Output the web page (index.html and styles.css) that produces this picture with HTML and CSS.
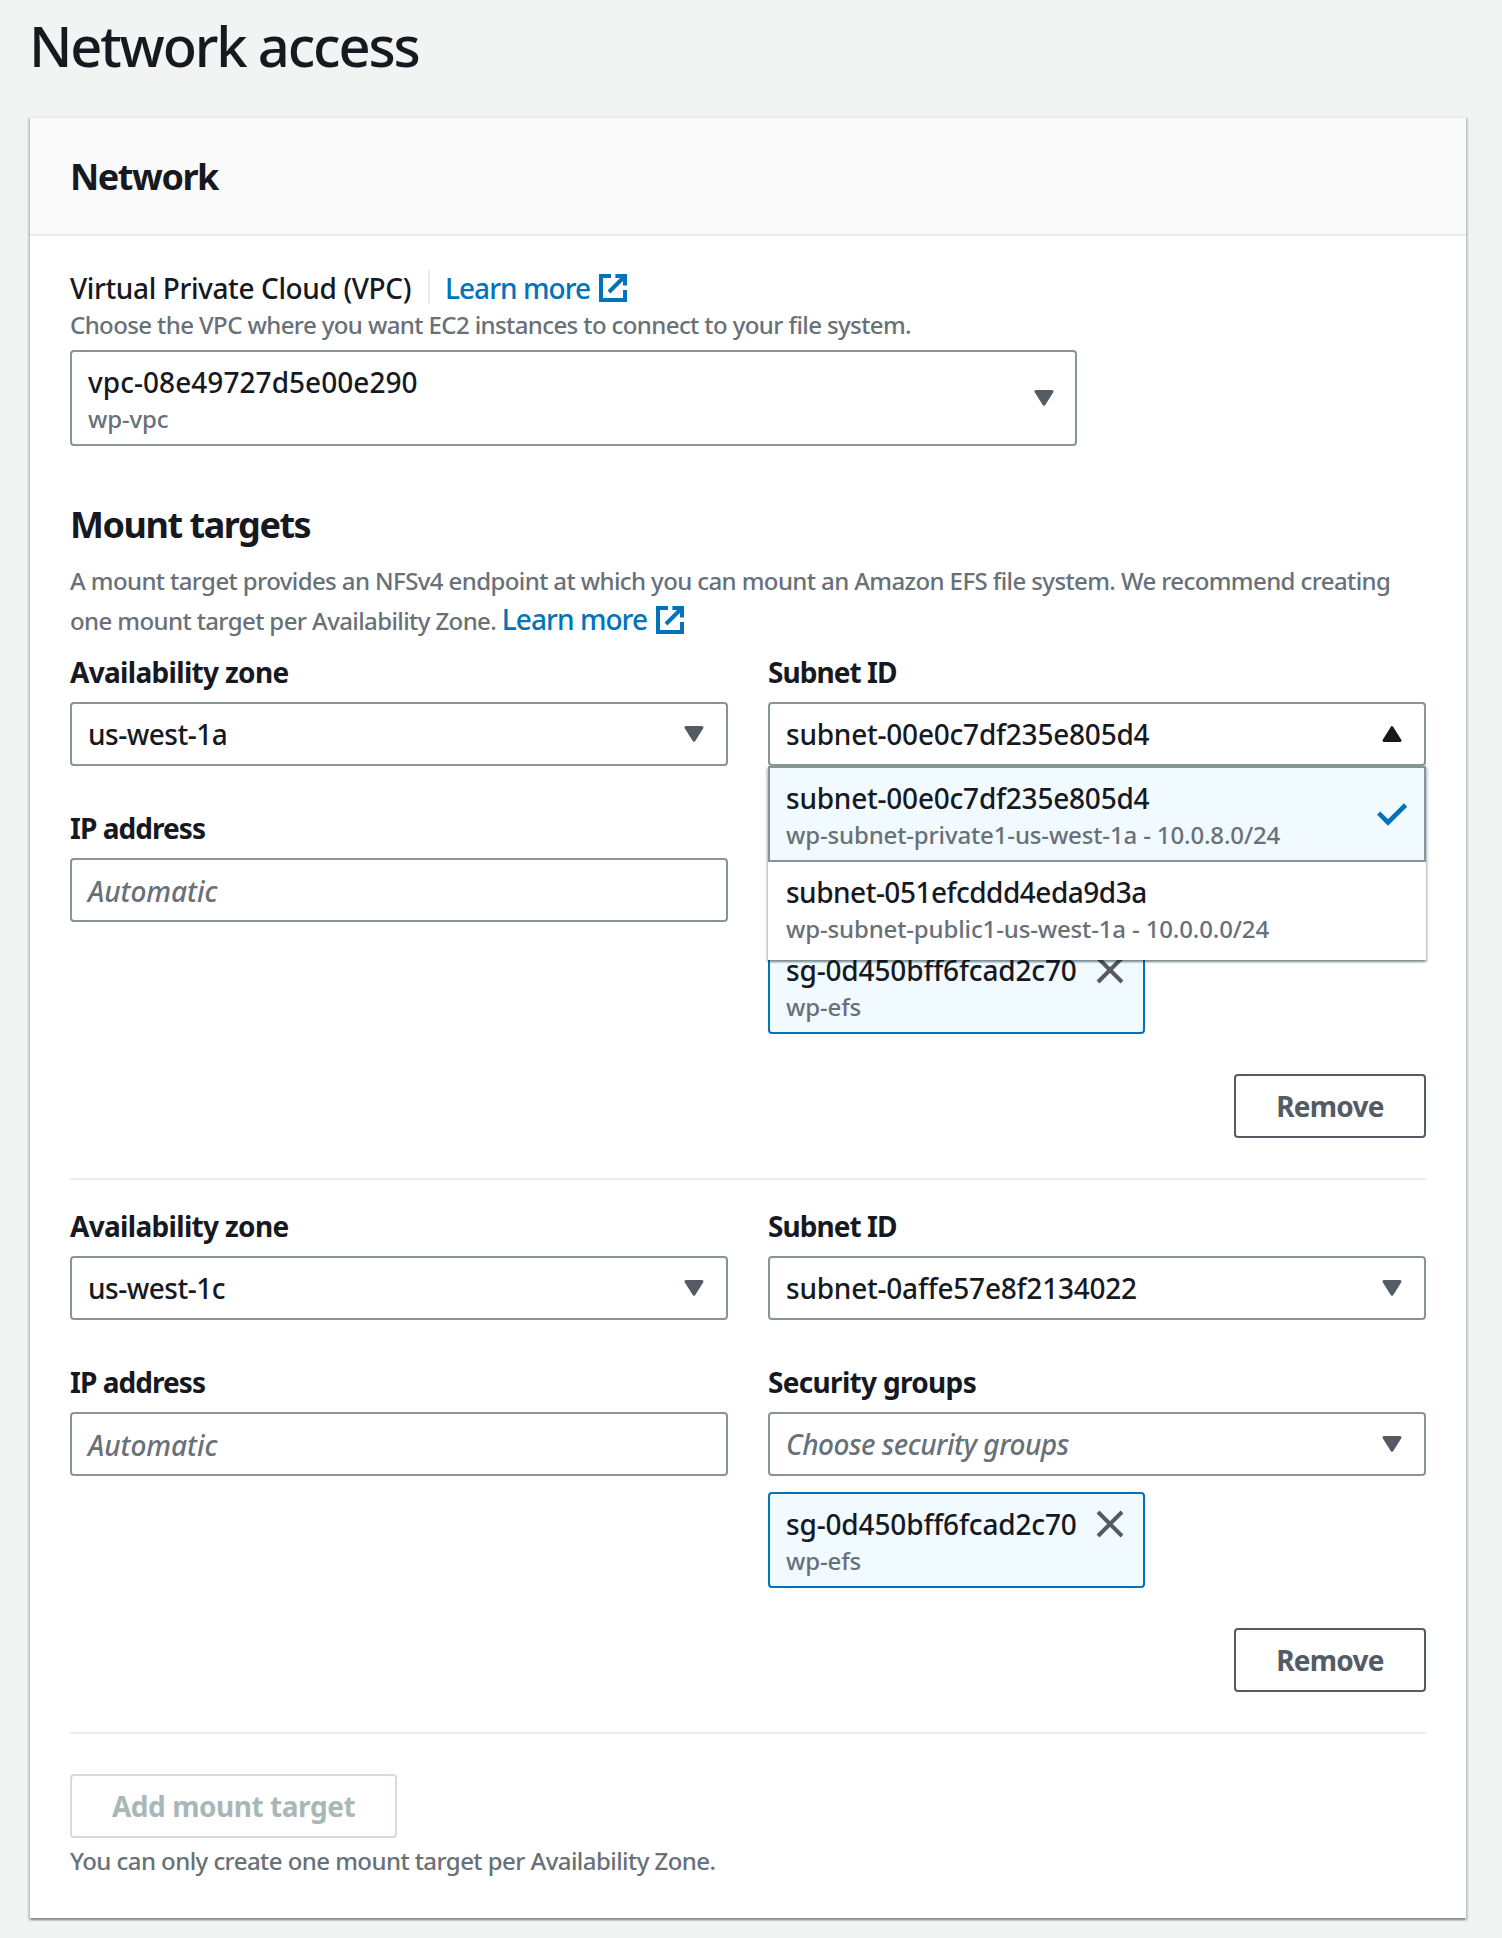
FILE: index.html
```html
<!DOCTYPE html>
<html lang="en">
<head>
<meta charset="utf-8">
<title>Network access</title>
<link rel="stylesheet" href="styles.css">
</head>
<body>
<svg class="sprite" width="0" height="0">
  <symbol id="caret" viewBox="0 0 20 16"><path d="M2 1.5h16L10 14.3z" stroke-width="3" stroke-linejoin="round" stroke="currentColor" fill="currentColor"/></symbol>
  <symbol id="external" viewBox="0 0 16 16"><path d="M14 9v5H2V2h5M9.2 2H14v4.8M6 10l8-8" fill="none" stroke="currentColor" stroke-width="2"/></symbol>
  <symbol id="close" viewBox="0 0 16 16"><path d="M2 2l12 12M14 2L2 14" fill="none" stroke="currentColor" stroke-width="2"/></symbol>
  <symbol id="check" viewBox="0 0 32 32"><path d="M2.7 15.2l9.3 9.3L29.6 7" fill="none" stroke="currentColor" stroke-width="4.6"/></symbol>
</svg>
<main class="page">
  <h1 class="page-title">Network access</h1>
  <section class="card">
    <header class="card-header"><h2 class="heading">Network</h2></header>
    <div class="card-body">
      <div class="vpc-row">
        <span class="vpc-label">Virtual Private Cloud (VPC)</span>
        <a class="link vpc-link"><span>Learn more</span><svg class="icon"><use href="#external"/></svg></a>
      </div>
      <p class="hint">Choose the VPC where you want EC2 instances to connect to your file system.</p>
      <div class="select select-tall">
        <div class="option-text"><span class="value vpc-id">vpc-08e49727d5e00e290</span><span class="sub">wp-vpc</span></div>
        <svg class="caret"><use href="#caret"/></svg>
      </div>

      <h2 class="heading mount-heading">Mount targets</h2>
      <p class="hint mount-hint">A mount target provides an NFSv4 endpoint at which you can mount an Amazon EFS file system. We recommend creating<br>one mount target per Availability Zone. <a class="link"><span>Learn more</span><svg class="icon"><use href="#external"/></svg></a></p>

      <div class="target">
        <div class="column">
          <label class="label">Availability zone</label>
          <div class="select"><span class="value zone">us-west-1a</span><svg class="caret"><use href="#caret"/></svg></div>
          <label class="label label-next tight">IP address</label>
          <div class="select"><span class="placeholder auto">Automatic</span></div>
        </div>
        <div class="column">
          <label class="label tight">Subnet ID</label>
          <div class="select select-open">
            <span class="value">subnet-00e0c7df235e805d4</span><svg class="caret caret-up"><use href="#caret"/></svg>
            <div class="dropdown">
              <div class="option option-selected">
                <div class="option-text"><span class="value">subnet-00e0c7df235e805d4</span><span class="sub">wp-subnet-private1-us-west-1a - 10.0.8.0/24</span></div>
                <svg class="icon check"><use href="#check"/></svg>
              </div>
              <div class="option option-next">
                <div class="option-text"><span class="value alt-id">subnet-051efcddd4eda9d3a</span><span class="sub">wp-subnet-public1-us-west-1a - 10.0.0.0/24</span></div>
              </div>
            </div>
          </div>
          <label class="label label-next">Security groups</label>
          <div class="select"><span class="placeholder">Choose security groups</span><svg class="caret"><use href="#caret"/></svg></div>
          <div class="token">
            <div class="option-text"><span class="value sg">sg-0d450bff6fcad2c70</span><span class="sub">wp-efs</span></div>
            <svg class="icon close"><use href="#close"/></svg>
          </div>
        </div>
      </div>
      <div class="actions"><button class="button remove">Remove</button></div>

      <div class="target target-next">
        <div class="column">
          <label class="label">Availability zone</label>
          <div class="select"><span class="value zone">us-west-1c</span><svg class="caret"><use href="#caret"/></svg></div>
          <label class="label label-next tight">IP address</label>
          <div class="select"><span class="placeholder auto">Automatic</span></div>
        </div>
        <div class="column">
          <label class="label tight">Subnet ID</label>
          <div class="select"><span class="value">subnet-0affe57e8f2134022</span><svg class="caret"><use href="#caret"/></svg></div>
          <label class="label label-next">Security groups</label>
          <div class="select"><span class="placeholder">Choose security groups</span><svg class="caret"><use href="#caret"/></svg></div>
          <div class="token">
            <div class="option-text"><span class="value sg">sg-0d450bff6fcad2c70</span><span class="sub">wp-efs</span></div>
            <svg class="icon close"><use href="#close"/></svg>
          </div>
        </div>
      </div>
      <div class="actions"><button class="button remove">Remove</button></div>

      <button class="button add" disabled>Add mount target</button>
      <p class="hint add-hint">You can only create one mount target per Availability Zone.</p>
    </div>
  </section>
</main>
</body>
</html>
```
FILE: styles.css
```css
* { box-sizing: border-box; }

body {
  margin: 0;
  background: #f2f3f3;
  color: #16191f;
  font: 500 28px/44px "Noto Sans", "Open Sans", sans-serif;
}

h1, h2, p { margin: 0; }

.sprite { display: block; }

.page { padding: 11px 36px 20px 30px; }

.page-title {
  margin-left: -1px;
  font-size: 56px;
  line-height: 68px;
  font-weight: 500;
  letter-spacing: -2.15px;
}

.card {
  height: 1802px;
  margin-top: 37px;
  background: #fff;
  border-top: 2px solid #eaeded;
  box-shadow: 0 2px 2px rgba(0, 28, 36, .3), 2px 2px 2px rgba(0, 28, 36, .15), -2px 2px 2px rgba(0, 28, 36, .15);
}

.card-header {
  display: flex;
  align-items: center;
  height: 118px;
  padding: 2px 40px 0;
  background: #fafafa;
  border-bottom: 2px solid #eaeded;
}

.heading {
  font-size: 36px;
  line-height: 44px;
  font-weight: 700;
  letter-spacing: -1.45px;
}

.card-body { padding: 29px 40px 41px; }

.vpc-row { display: flex; align-items: center; }
.vpc-row span { padding-top: 2px; line-height: 42px; }
.vpc-label { width: 358px; letter-spacing: -.38px; }

.link { color: #0073bb; letter-spacing: -.95px; }
.link svg { margin-left: 7px; }
.vpc-link {
  display: flex;
  align-items: center;
  height: 34px;
  padding-left: 15px;
  border-left: 2px solid #eaeded;
}

.icon { display: block; flex: none; width: 32px; height: 32px; }
.vpc-link .icon { margin-top: 2px; }

.hint {
  color: #687078;
  font-size: 24px;
  line-height: 32px;
  letter-spacing: -.6px;
}

.select {
  position: relative;
  display: flex;
  align-items: center;
  justify-content: space-between;
  height: 64px;
  margin-top: 9px;
  padding: 0 22px 0 16px;
  background: #fff;
  border: 2px solid #879596;
  border-radius: 4px;
}
.select-tall { width: 1007px; height: 96px; padding-right: 21px; }

.option-text { display: flex; flex-direction: column; }
.option-text .value { padding-top: 2px; line-height: 42px; }
.select-tall .option-text { padding-bottom: 2px; }

.value { letter-spacing: -.22px; white-space: nowrap; }
.vpc-id { letter-spacing: .05px; }
.zone, .alt-id { letter-spacing: -.5px; }
.sg { letter-spacing: -.15px; }

.sub {
  color: #687078;
  font-size: 24px;
  line-height: 32px;
  letter-spacing: -.14px;
  white-space: nowrap;
}

.placeholder { color: #687078; font-style: italic; letter-spacing: -.48px; }
.auto { padding-top: 1px; letter-spacing: -.05px; }

.caret { display: block; width: 20px; height: 16px; color: #545b64; }
.caret-up { color: #16191f; transform: rotate(180deg); }

.mount-heading { margin-top: 57px; }
.mount-hint { margin-top: 14px; line-height: 40px; }
.mount-hint .link { font-size: 28px; line-height: 28px; }
.mount-hint .icon { display: inline-block; margin-top: -8px; margin-bottom: -6px; vertical-align: 0; }

.target {
  display: grid;
  grid-template-columns: 1fr 1fr;
  gap: 40px;
  padding-top: 8px;
}
.target-next { padding-top: 23px; }

.label {
  display: block;
  padding-top: 2px;
  font-weight: 700;
  line-height: 42px;
  letter-spacing: -.68px;
}
.label-next { margin-top: 39px; }
.tight { letter-spacing: -.95px; }

.dropdown {
  position: absolute;
  z-index: 2;
  top: 62px;
  left: -2px;
  right: -2px;
  background: #fff;
  box-shadow: 0 2px 2px rgba(0, 28, 36, .3), 2px 2px 2px rgba(0, 28, 36, .15), -2px 2px 2px rgba(0, 28, 36, .15);
}
.option {
  display: flex;
  align-items: flex-start;
  justify-content: space-between;
  height: 96px;
  padding: 7px 16px 0;
  border: 2px solid transparent;
}
.option-selected { background: #f1faff; border-color: #879596; }
.option-next { height: 100px; margin-top: -2px; }
.check { margin-top: 23px; color: #0073bb; }

.token {
  display: flex;
  justify-content: space-between;
  width: 377px;
  height: 96px;
  margin-top: 16px;
  padding: 7px 17px 0 16px;
  background: #f1faff;
  border: 2px solid #0073bb;
  border-radius: 4px;
}
.close { margin-top: 7px; color: #545b64; }

.actions {
  display: flex;
  justify-content: flex-end;
  padding: 40px 0;
  border-bottom: 2px solid #eaeded;
}

.button {
  display: flex;
  align-items: center;
  justify-content: center;
  height: 64px;
  padding: 0;
  background: #fff;
  border: 2px solid #545b64;
  border-radius: 4px;
  color: #545b64;
  font: 700 28px/44px "Noto Sans", "Open Sans", sans-serif;
}
.remove { width: 192px; letter-spacing: -.75px; }
.add {
  width: 327px;
  margin-top: 40px;
  border-color: #d5dbdb;
  color: #aab7b8;
  letter-spacing: -.45px;
}
.add-hint { margin-top: 7px; letter-spacing: -.56px; }
```
